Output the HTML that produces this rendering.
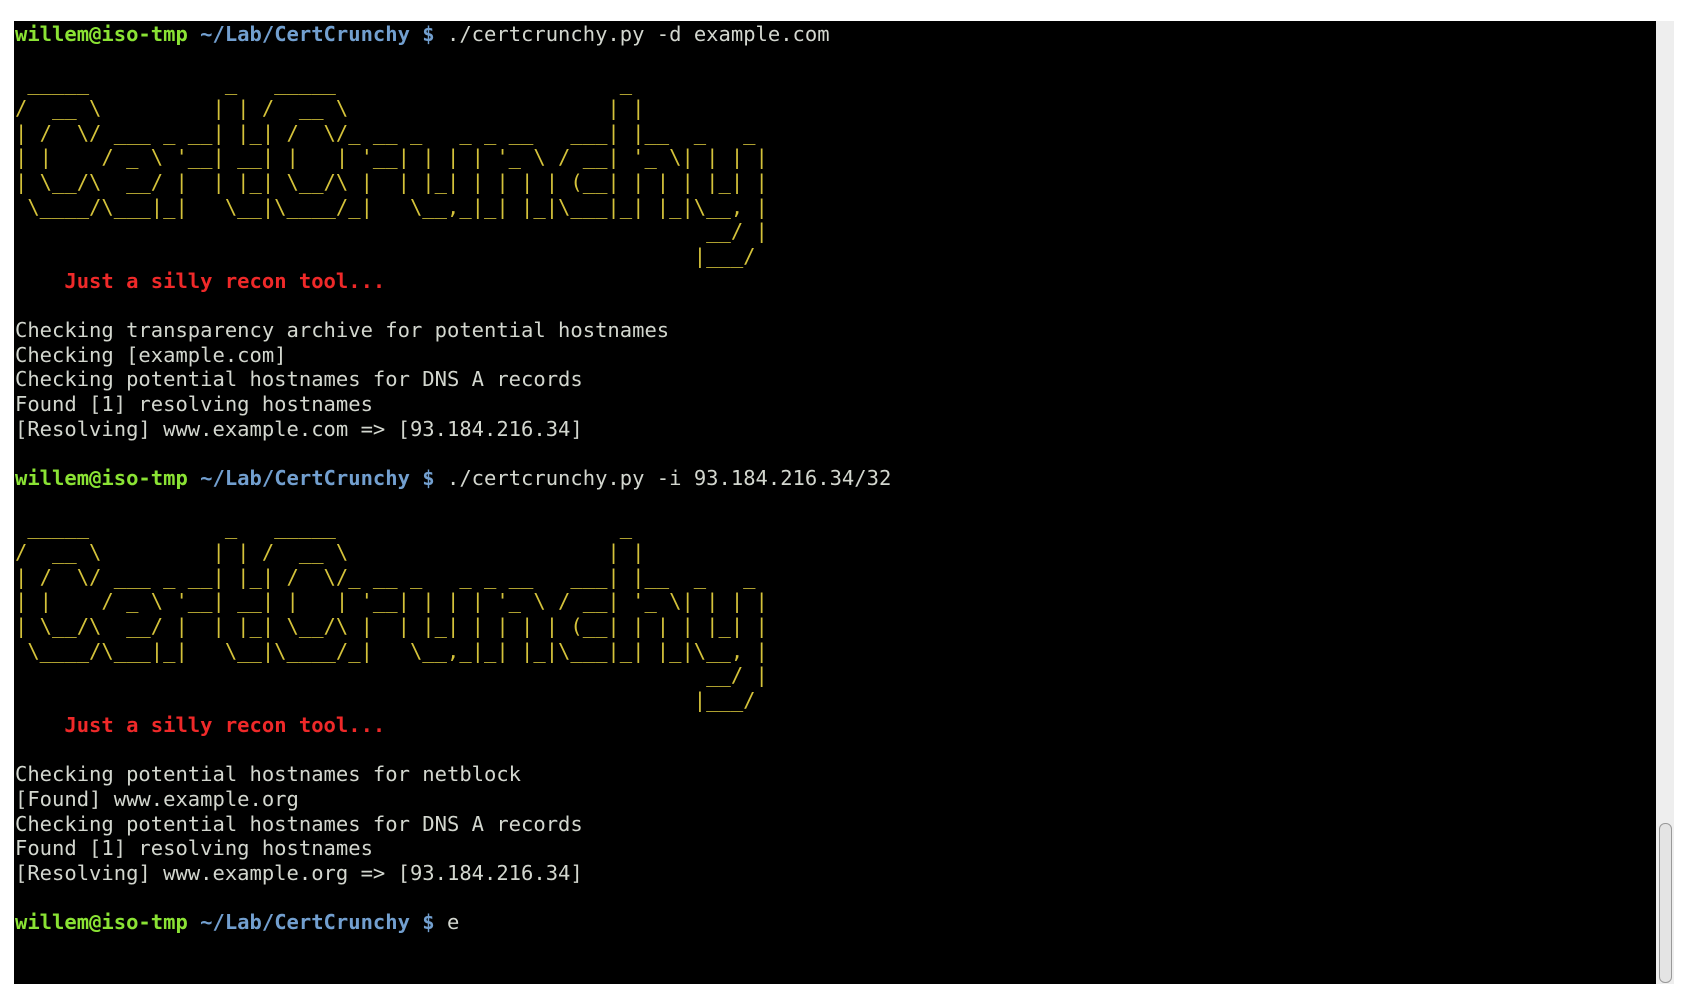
<!DOCTYPE html>
<html><head><meta charset="utf-8"><style>
html,body{margin:0;padding:0;background:#fff;width:1686px;height:998px;overflow:hidden}
#term{position:absolute;left:14px;top:21px;width:1642px;height:963px;background:#000}
pre{margin:0;position:absolute;left:1px;top:1px;font-family:"DejaVu Sans Mono","Liberation Mono",monospace;font-size:20.5px;line-height:24.67px;color:#d3d7cf}
.g{color:#8ae234;font-weight:bold}.b{color:#729fcf;font-weight:bold}
.y{color:#d4c23a}.r{color:#ef2929;font-weight:bold}
#sb{position:absolute;left:1656px;top:21px;width:18px;height:963px;background:#eeeeee}
#th{position:absolute;left:1659px;top:823px;width:11px;height:158px;border:1px solid #999;border-radius:6px;background:#e4e4e4}
</style></head><body>
<div id="term"><pre><span class="g">willem@iso-tmp</span> <span class="b">~/Lab/CertCrunchy $</span> ./certcrunchy.py -d example.com

<span class="y"> _____           _   _____                       _           
/  __ \         | | /  __ \                     | |          
| /  \/ ___ _ __| |_| /  \/_ __ _   _ _ __   ___| |__  _   _ 
| |    / _ \ '__| __| |   | '__| | | | '_ \ / __| '_ \| | | |
| \__/\  __/ |  | |_| \__/\ |  | |_| | | | | (__| | | | |_| |
 \____/\___|_|   \__|\____/_|   \__,_|_| |_|\___|_| |_|\__, |
                                                        __/ |
                                                       |___/ </span>
    <span class="r">Just a silly recon tool...</span>

Checking transparency archive for potential hostnames
Checking [example.com]
Checking potential hostnames for DNS A records
Found [1] resolving hostnames
[Resolving] www.example.com =&gt; [93.184.216.34]

<span class="g">willem@iso-tmp</span> <span class="b">~/Lab/CertCrunchy $</span> ./certcrunchy.py -i 93.184.216.34/32

<span class="y"> _____           _   _____                       _           
/  __ \         | | /  __ \                     | |          
| /  \/ ___ _ __| |_| /  \/_ __ _   _ _ __   ___| |__  _   _ 
| |    / _ \ '__| __| |   | '__| | | | '_ \ / __| '_ \| | | |
| \__/\  __/ |  | |_| \__/\ |  | |_| | | | | (__| | | | |_| |
 \____/\___|_|   \__|\____/_|   \__,_|_| |_|\___|_| |_|\__, |
                                                        __/ |
                                                       |___/ </span>
    <span class="r">Just a silly recon tool...</span>

Checking potential hostnames for netblock
[Found] www.example.org
Checking potential hostnames for DNS A records
Found [1] resolving hostnames
[Resolving] www.example.org =&gt; [93.184.216.34]

<span class="g">willem@iso-tmp</span> <span class="b">~/Lab/CertCrunchy $</span> e</pre></div>
<div id="sb"></div><div id="th"></div>
</body></html>
